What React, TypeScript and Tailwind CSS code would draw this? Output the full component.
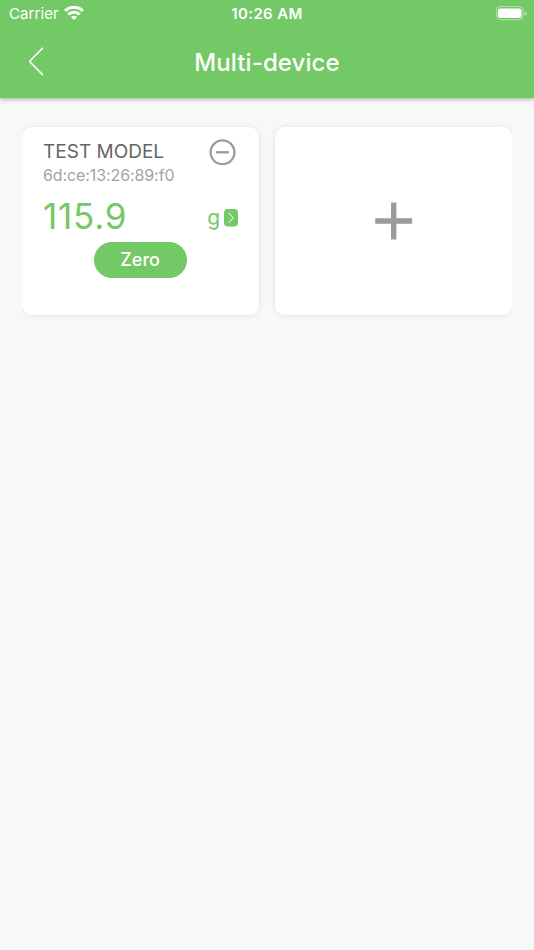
function StatusBar() {
  return (
    <div className="grid h-7 grid-cols-3 items-center pl-[9px] pr-[7px] text-[15px]">
      <div className="flex items-center gap-[5px]">
        <span className="tracking-[0.1px]">Carrier</span>
        <svg className="-mt-[2px]" width="20" height="14" viewBox="0 0 20 14" fill="none" stroke="white" strokeWidth="3">
          <path d="M1.1 4.9a12.8 12.8 0 0 1 17.8 0" />
          <path d="M4.2 8.5a8.4 8.4 0 0 1 11.6 0" />
          <path d="M10 14 6.9 11a4.4 4.4 0 0 1 6.2 0Z" fill="white" stroke="none" />
        </svg>
      </div>
      <span className="-ml-[2px] text-center font-semibold tracking-[0.35px]">10:26 AM</span>
      <svg className="-mt-[2px] justify-self-end" width="32" height="16" viewBox="0 0 32 16">
        <rect x="1.5" y="1.6" width="26.6" height="13.2" rx="3.8" fill="none" stroke="white" strokeOpacity="0.45" />
        <rect x="3" y="3.4" width="23.6" height="9.6" rx="2.3" fill="white" />
        <path d="M29.6 5.9q2 .8 2 2.4t-2 2.4Z" fill="white" fillOpacity="0.5" />
      </svg>
    </div>
  );
}

function Header() {
  return (
    <header className="relative z-10 h-[98px] bg-[#72c966] text-white shadow-[0_1px_5px_rgba(0,0,0,0.35)]">
      <StatusBar />
      <div className="grid h-[68px] grid-cols-[1fr_auto_1fr] items-center pl-[28px] pr-[28px]">
        <svg width="17" height="30" viewBox="0 0 17 30" fill="none" stroke="white" strokeWidth="1.6" strokeLinecap="round" strokeLinejoin="round">
          <path d="M14.5 1.2 2.1 13.8a.9.9 0 0 0 0 1.2L14.5 27.6" />
        </svg>
        <h1 className="pt-px text-[24px] leading-[30px] font-medium tracking-[0.1px]">Multi-device</h1>
      </div>
    </header>
  );
}

function DeviceCard() {
  return (
    <section className="h-[188.5px] rounded-[10px] bg-white pr-[21px] pl-[21px] pt-[12.5px] shadow-[0_0_6px_rgba(0,0,0,0.09)]">
      <div className="flex justify-between">
        <div>
          <h2 className="pt-px text-[19px] leading-[24px] text-[#666]">TEST MODEL</h2>
          <p className="-mt-px text-[16px] leading-[24px] tracking-[-0.1px] text-[#a3a3a3]">6d:ce:13:26:89:f0</p>
        </div>
        <svg className="mr-[2px]" width="27" height="27" viewBox="0 0 27 27" fill="none" stroke="#9b9b9b" strokeWidth="2.3">
          <circle cx="13.5" cy="13.3" r="11.9" />
          <path d="M7 13.3h13" />
        </svg>
      </div>
      <div className="flex h-[55px] items-center justify-between text-[#72c966]">
        <span className="pt-[3px] text-[35px] tracking-[0.8px]">115.9</span>
        <span className="flex items-center gap-1 pt-[6px] text-[21px]">
          <span>g</span>
          <svg width="14" height="18" viewBox="0 0 14 18">
            <rect width="14" height="17.5" rx="3.8" fill="#72c966" />
            <path d="m4.7 3.8 4.6 5-4.6 5" fill="none" stroke="white" strokeWidth="1" />
          </svg>
        </span>
      </div>
      <button className="mx-auto block h-[35.5px] w-[92.5px] rounded-full bg-[#72c966] pr-px text-[18px] font-medium text-white">Zero</button>
    </section>
  );
}

function AddCard() {
  return (
    <button className="flex h-[188.5px] items-center justify-center rounded-[10px] bg-white shadow-[0_0_6px_rgba(0,0,0,0.09)]">
      <svg width="39" height="38" viewBox="0 0 39 38" fill="none" stroke="#9b9b9b" strokeWidth="5.4">
        <path d="M1.2 19h37M19.7 .5v37" />
      </svg>
    </button>
  );
}

export default function App() {
  return (
    <div className="h-[950px] w-[534px] bg-[#f8f8f8] font-['Inter','Liberation_Sans',sans-serif]">
      <Header />
      <main className="mx-[22px] grid grid-cols-2 gap-[15.5px] overflow-hidden pt-[28.5px] pb-4">
        <DeviceCard />
        <AddCard />
      </main>
    </div>
  );
}
